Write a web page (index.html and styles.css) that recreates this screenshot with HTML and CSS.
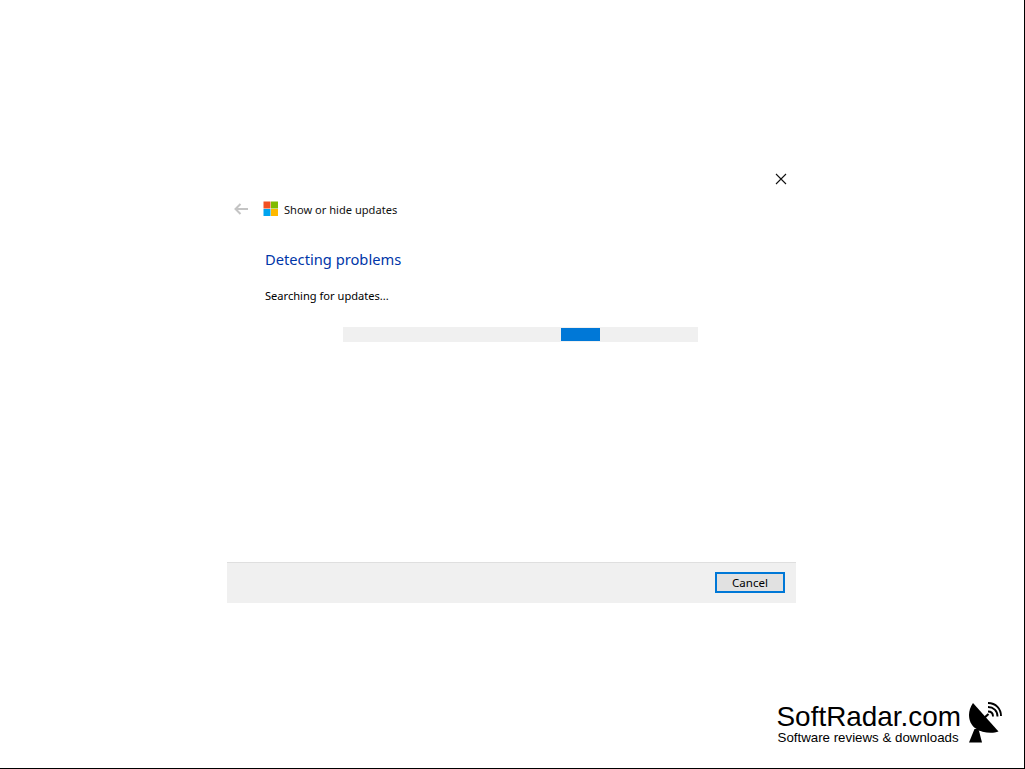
FILE: index.html
```html
<!DOCTYPE html>
<html lang="en">
<head>
<meta charset="utf-8">
<title>Show or hide updates</title>
<link rel="stylesheet" href="styles.css">
</head>
<body>
<div class="screen">
  <section class="dialog">
    <div class="dialog-close">
      <svg width="12" height="12" viewBox="0 0 12 12"><path d="M1 1l10 10M11 1L1 11" stroke="#111" stroke-width="1.1" fill="none"/></svg>
    </div>
    <header class="dialog-nav">
      <svg class="back" width="14" height="12" viewBox="0 0 14 12"><path d="M6.5 1L1.5 6l5 5M1.5 6H14" stroke="#c4c4c4" stroke-width="2" fill="none"/></svg>
      <svg class="ms-logo" width="16" height="16" viewBox="0 0 16 16">
        <rect x="0.5" y="0.5" width="7" height="7" fill="#f25022"/>
        <rect x="8" y="0.5" width="7" height="7" fill="#7fba00"/>
        <rect x="0.5" y="8" width="7" height="7" fill="#00a4ef"/>
        <rect x="8" y="8" width="7" height="7" fill="#ffb900"/>
      </svg>
      <span class="nav-title">Show or hide updates</span>
    </header>
    <div class="dialog-body">
      <h1 class="heading">Detecting problems</h1>
      <p class="status">Searching for updates...</p>
      <div class="progress"><div class="progress-gap"></div><div class="progress-bar"></div></div>
    </div>
    <footer class="dialog-footer">
      <button class="cancel" type="button">Cancel</button>
    </footer>
  </section>
  <aside class="brand">
    <div class="brand-text">
      <div class="brand-name">SoftRadar.com</div>
      <div class="brand-tag">Software reviews &amp; downloads</div>
    </div>
    <svg class="brand-icon" width="34" height="41" viewBox="0 0 34 41">
      <path d="M5 1L30.5 29.5C24 32 14 31 7 26C0.5 21 -1.5 10 5 1Z" fill="#000"/>
      <path d="M1 40.5H14L10.5 27H6.5Z" fill="#000"/>
      <path d="M15 17L20.5 12" stroke="#000" stroke-width="2.2" fill="none"/>
      <path d="M20 9.5C23 9.5 25 11.5 25 14.5M20 5C25.5 5 29.5 9 29.5 14.5M20 1C28 1 33 7 33 14" stroke="#000" stroke-width="1.9" fill="none"/>
    </svg>
  </aside>
</div>
</body>
</html>
```
FILE: styles.css
```css
html, body {
  margin: 0;
  padding: 0;
  background: #fff;
}
.screen {
  position: relative;
  box-sizing: border-box;
  width: 1025px;
  height: 769px;
  padding: 168px 0 0 227px;
  border-right: 1px solid #000;
  border-bottom: 1px solid #000;
  font-family: "Noto Sans", "Open Sans", sans-serif;
  overflow: hidden;
}
.dialog {
  width: 569px;
  height: 435px;
  display: flex;
  flex-direction: column;
}
.dialog-close {
  display: flex;
  justify-content: flex-end;
  padding: 5px 9px 0 0;
  height: 17px;
}
.dialog-nav {
  display: flex;
  align-items: center;
  height: 16px;
  margin-top: 11px;
}
.back { margin-left: 7px; }
.ms-logo { margin-left: 15px; }
.nav-title {
  margin-left: 5px;
  font-size: 11.1px;
  color: #111;
}
.dialog-body {
  flex: 1;
  padding: 0 0 0 38px;
}
.heading {
  margin: 32px 0 0;
  font-size: 14.7px;
  font-weight: 400;
  line-height: 20px;
  color: #0036a8;
}
.status {
  margin: 19px 0 0;
  font-size: 11.1px;
  line-height: 16px;
  color: #000;
}
.progress {
  display: flex;
  align-items: center;
  box-sizing: border-box;
  width: 355px;
  height: 15px;
  margin: 23px 0 0 78px;
  background: #f0f0f0;
}
.progress-gap { width: 218px; }
.progress-bar {
  width: 39px;
  height: 13px;
  background: #0078d7;
}
.dialog-footer {
  box-sizing: border-box;
  display: flex;
  align-items: center;
  justify-content: flex-end;
  height: 41px;
  padding: 0 11px 1px 0;
  background: #f0f0f0;
  border-top: 1px solid #dfdfdf;
}
.cancel {
  box-sizing: border-box;
  width: 70px;
  height: 21px;
  padding: 0 0 1px;
  background: #e1e1e1;
  border: 2px solid #0078d7;
  font-family: inherit;
  font-size: 11.5px;
  color: #000;
}
.brand {
  position: absolute;
  right: 22px;
  bottom: 25px;
  display: flex;
  align-items: flex-end;
  gap: 7px;
  font-family: "Liberation Sans", Arial, sans-serif;
  color: #000;
}
.brand-text { display: flex; flex-direction: column; margin-bottom: -2px; }
.brand-name { font-size: 27.9px; line-height: 28px; }
.brand-tag { font-size: 13.3px; line-height: 14px; margin-left: 1px; }
.brand-icon { display: block; }
```
